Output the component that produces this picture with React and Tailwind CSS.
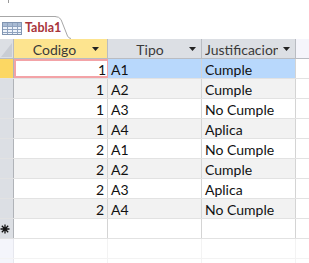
import React from "react";

const rows = [
  [1, "A1", "Cumple"],
  [1, "A2", "Cumple"],
  [1, "A3", "No Cumple"],
  [1, "A4", "Aplica"],
  [2, "A1", "No Cumple"],
  [2, "A2", "Cumple"],
  [2, "A3", "Aplica"],
  [2, "A4", "No Cumple"],
];

function Arrow() {
  return (
    <svg width="7" height="4" viewBox="0 0 7 4" className="shrink-0">
      <path d="M0 0 H7 L3.5 4 Z" fill="#222" />
    </svg>
  );
}

function TableIcon() {
  return (
    <svg width="20" height="13" viewBox="0 0 20 13" className="shrink-0">
      <rect x="0.5" y="0.5" width="19" height="12" fill="#eef3fa" stroke="#8094b0" />
      <rect x="1" y="1" width="18" height="3" fill="#a9bbd3" />
      <path d="M1 4.5 H19 M1 7.5 H19 M1 10.5 H19 M5.5 1 V12 M10.5 1 V12 M15.5 1 V12" stroke="#8fa3bf" strokeWidth="1" />
    </svg>
  );
}

function Star() {
  return (
    <svg width="10" height="10" viewBox="0 0 10 10">
      <path d="M5 0.5 V9.5 M0.5 5 H9.5 M1.8 1.8 L8.2 8.2 M8.2 1.8 L1.8 8.2" stroke="#111" strokeWidth="1.3" />
    </svg>
  );
}

export default function App() {
  return (
    <div
      className="w-[309px] h-[263px] bg-white overflow-hidden relative"
      style={{ fontFamily: "Lato, 'Open Sans', sans-serif" }}
    >
      <div className="absolute left-[8px] top-0 w-px h-[3px] bg-[#9a9a9a]" />
      {/* tab strip */}
      <div className="h-[39px] flex items-end">
        <div className="flex items-stretch h-[23px]">
          <div className="w-[56px] border-t border-[#a7a7a7] bg-white flex items-center gap-[3px] pl-[2px] pt-px whitespace-nowrap">
            <TableIcon />
            <span className="text-[12.5px] font-bold text-[#a8343a] leading-none">Tabla1</span>
          </div>
          <svg width="16" height="23" viewBox="0 0 16 23" className="shrink-0 -ml-px">
            <path d="M0 0.5 Q4 0.5 6 3.5 L12.5 20 Q13.8 22.5 16 22.5" fill="white" stroke="#a7a7a7" strokeWidth="1" />
          </svg>
        </div>
      </div>

      {/* header */}
      <div className="flex h-[20px] border-b border-[#b9bcc2] text-[14px] text-[#3a3a3a]">
        <div className="w-[14px] shrink-0 bg-[#dcdfe4] border-r border-[#b9bcc2] relative">
          <svg width="13" height="19" viewBox="0 0 13 19" className="absolute left-0 top-0">
            <path d="M1 18 L12 4 V18 Z" fill="#c9cdd4" />
          </svg>
        </div>
        <div className="w-[94px] shrink-0 bg-[#fde48f] border-r border-[#b9bcc2] flex items-center pl-[3px] pr-[8px]">
          <span className="flex-1 text-center leading-[19px] pt-[2px]">Codigo</span>
          <Arrow />
        </div>
        <div className="w-[94px] shrink-0 bg-[#dcdfe4] border-r border-[#b9bcc2] flex items-center pl-[3px] pr-[5px]">
          <span className="flex-1 text-center leading-[19px] pt-[2px]">Tipo</span>
          <Arrow />
        </div>
        <div className="w-[94px] shrink-0 bg-[#dcdfe4] border-r border-[#b9bcc2] flex items-center pl-[3px] pr-[5px]">
          <span className="flex-1 overflow-hidden whitespace-nowrap leading-[19px] pt-[2px] mr-[5px]">Justificacion</span>
          <Arrow />
        </div>
        <div className="flex-1 bg-[#f5f5fb]" />
      </div>

      {/* data rows */}
      {rows.map((r, i) => {
        const current = i === 0;
        const bg = i % 2 === 1 ? "bg-[#f2f2f2]" : "bg-white";
        return (
          <div key={i} className="flex h-[20px] border-b border-[#e2e2e2] text-[14px] text-[#111]">
            <div
              className={
                "w-[14px] shrink-0 border-r border-[#b0b3b8] " +
                (current ? "bg-[#fcd763]" : "bg-[#dcdfe4]")
              }
            />
            <div
              className={
                "w-[94px] shrink-0 border-r border-[#d4d4d4] text-right leading-[16px] " +
                (current ? "bg-white border-2 border-[#f3a3a7] pr-[1px] pt-[1px]" : bg + " pr-[3px] pt-[3px]")
              }
            >
              {r[0]}
            </div>
            <div
              className={
                "w-[94px] shrink-0 border-r border-[#d4d4d4] pl-[3px] pt-[3px] leading-[16px] " +
                (current ? "bg-[#b8d8fc]" : bg)
              }
            >
              {r[1]}
            </div>
            <div
              className={
                "w-[94px] shrink-0 border-r border-[#d4d4d4] pl-[3px] pt-[3px] leading-[16px] " +
                (current ? "bg-[#b8d8fc]" : bg)
              }
            >
              {r[2]}
            </div>
            <div className="flex-1 bg-white" />
          </div>
        );
      })}

      {/* new row */}
      <div className="flex h-[20px] border-b border-[#e2e2e2] text-[14px]">
        <div className="w-[14px] shrink-0 bg-[#dcdfe4] border-r border-[#b0b3b8] flex items-center justify-start pl-0">
          <Star />
        </div>
        <div className="w-[94px] shrink-0 border-r border-[#d4d4d4]" />
        <div className="w-[94px] shrink-0 border-r border-[#d4d4d4]" />
        <div className="w-[94px] shrink-0 border-r border-[#d4d4d4]" />
        <div className="flex-1" />
      </div>

      {/* empty area */}
      <div className="flex h-[20px] border-b border-[#f3f3f3]">
        <div className="w-[14px] shrink-0 bg-[#f4f5fb] border-r border-[#e6e7ee]" />
        <div className="w-[94px] shrink-0 border-r border-[#f3f3f3]" />
        <div className="w-[94px] shrink-0 border-r border-[#f3f3f3]" />
        <div className="w-[94px] shrink-0 border-r border-[#f3f3f3]" />
        <div className="flex-1" />
      </div>
      <div className="flex h-[20px]">
        <div className="w-[14px] shrink-0 bg-[#f4f5fb] border-r border-[#e6e7ee]" />
        <div className="w-[94px] shrink-0 border-r border-[#f3f3f3]" />
        <div className="w-[94px] shrink-0 border-r border-[#f3f3f3]" />
        <div className="w-[94px] shrink-0 border-r border-[#f3f3f3]" />
        <div className="flex-1" />
      </div>
    </div>
  );
}
